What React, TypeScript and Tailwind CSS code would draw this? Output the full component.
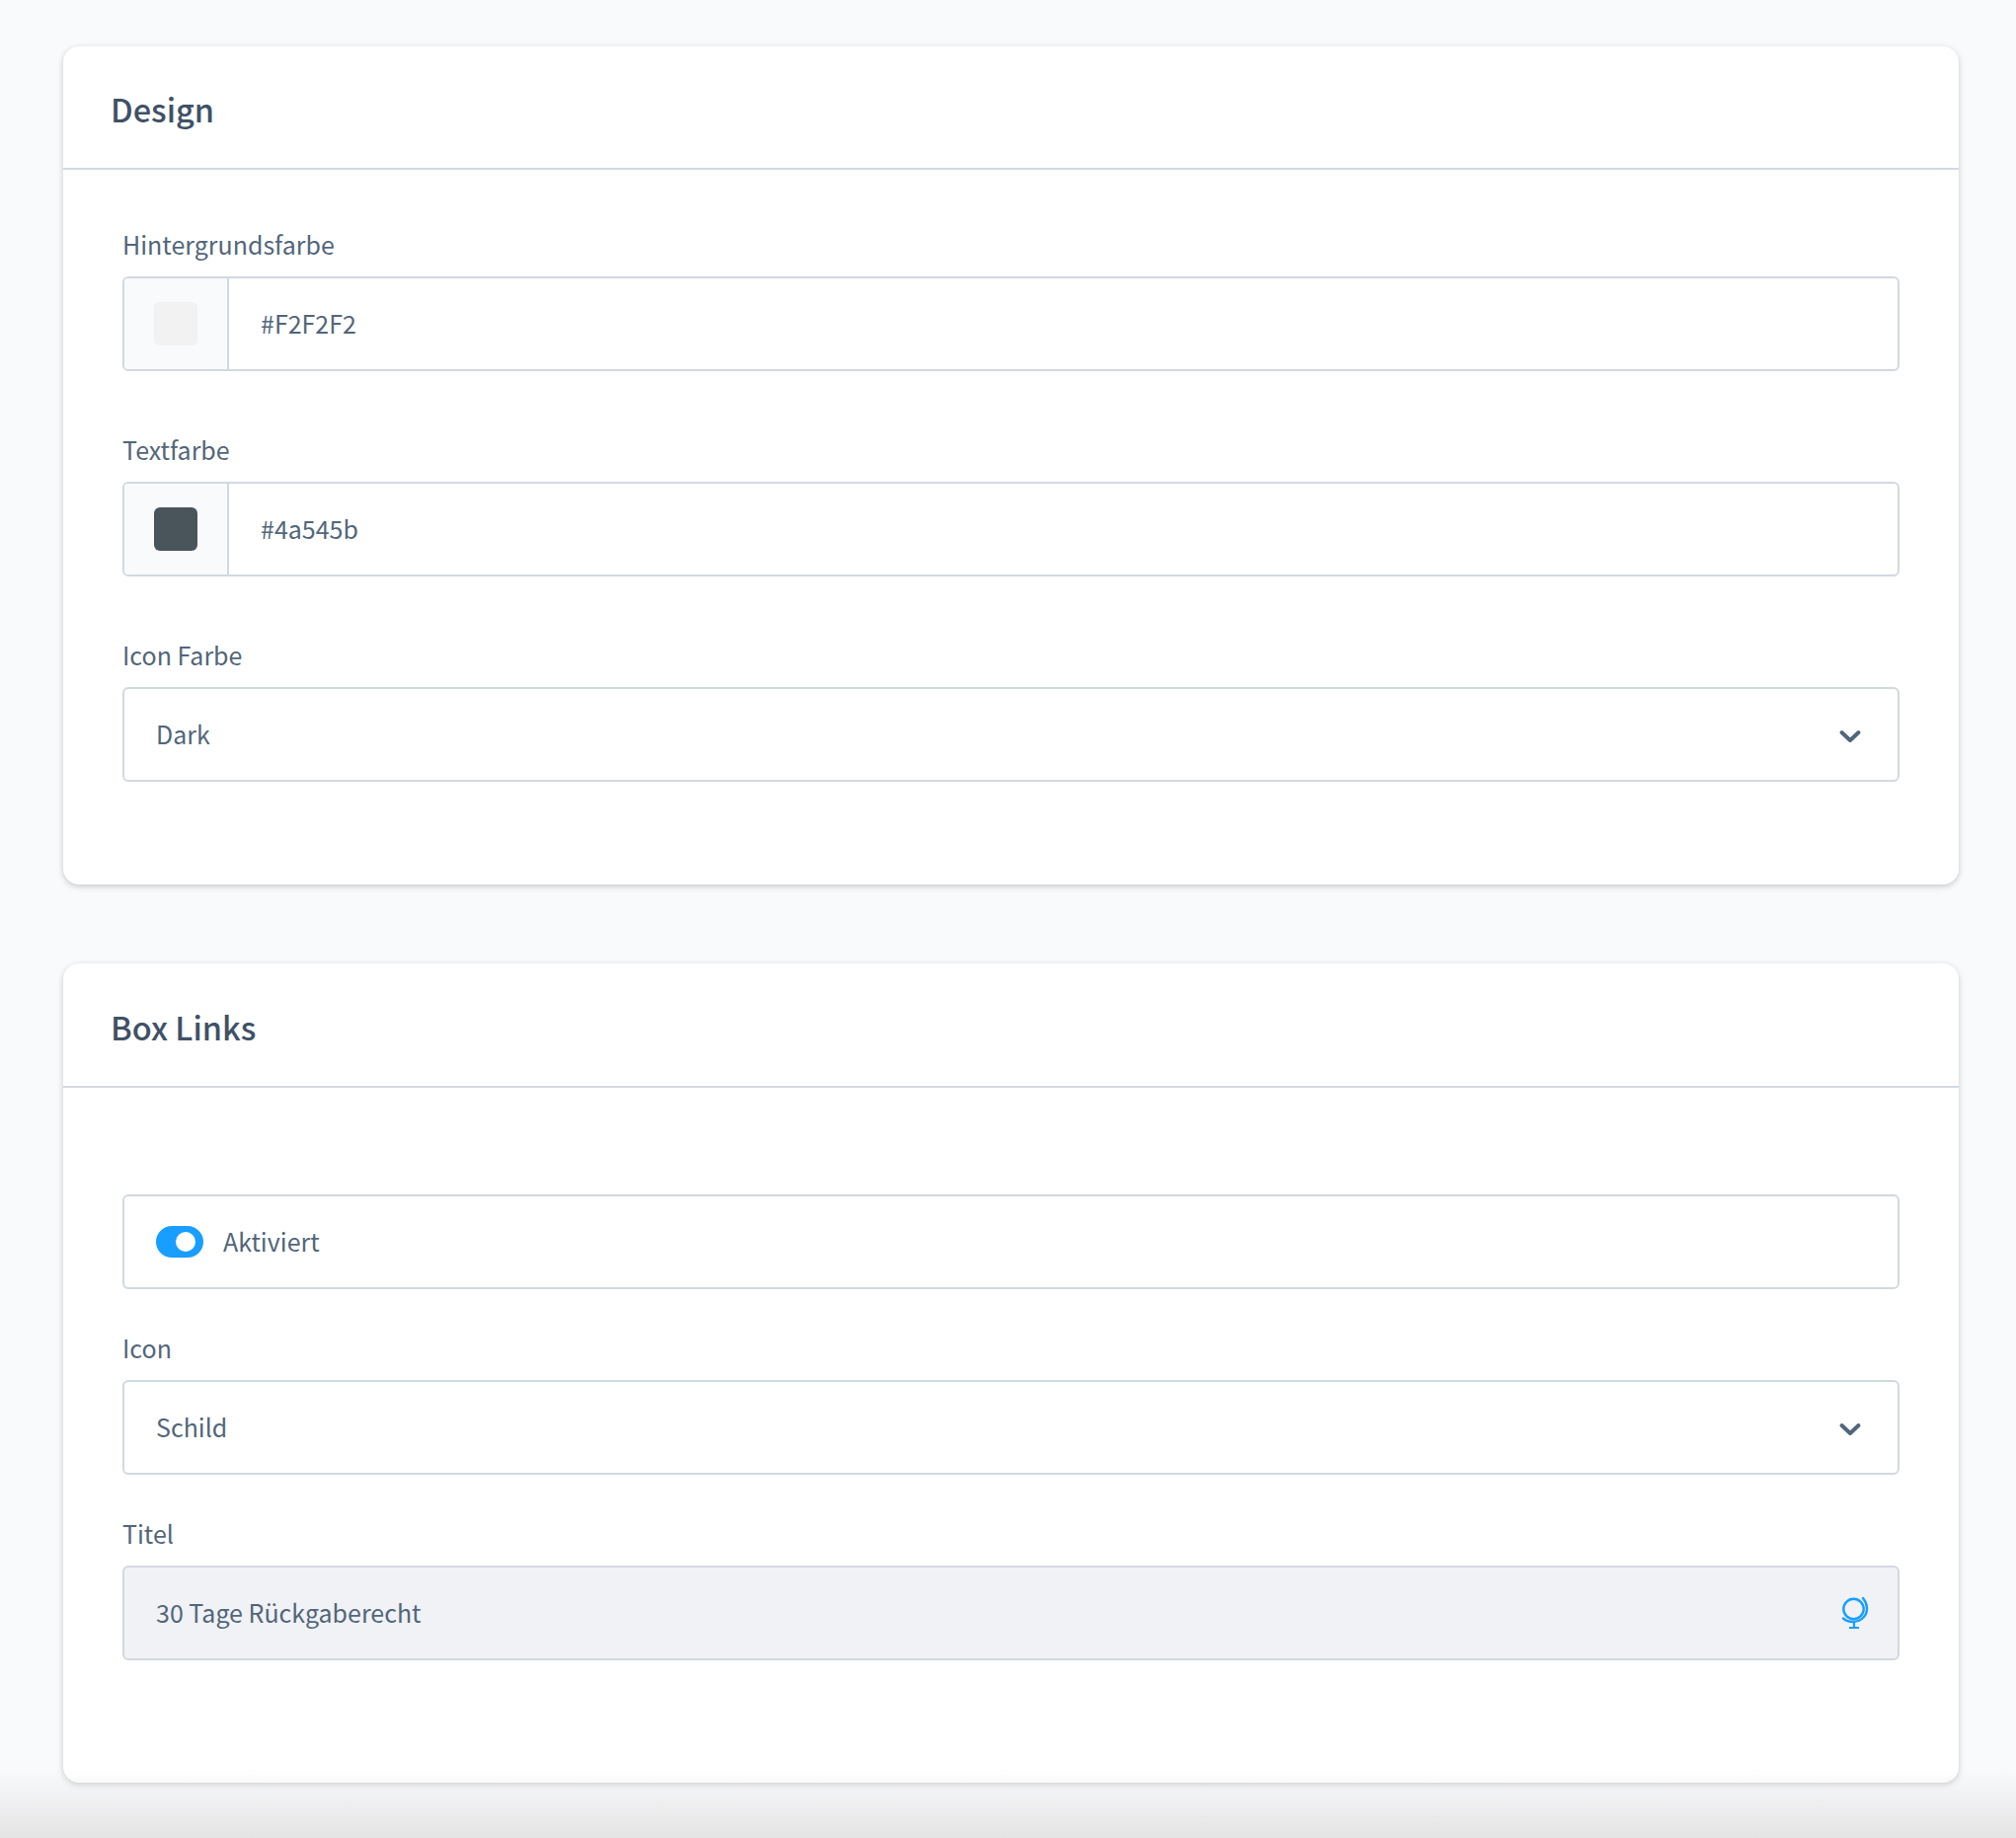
function Chevron() {
  return (
    <svg width="24" height="24" viewBox="0 0 24 24" fill="none" className="mt-[3px] shrink-0">
      <path d="M3.5 8 L12 16 L20.5 8" stroke="#52667a" strokeWidth="4" strokeLinecap="round" strokeLinejoin="round" />
    </svg>
  );
}

function Globe() {
  return (
    <svg width="28" height="34" viewBox="0 0 28 34" fill="none" className="shrink-0">
      <circle cx="12.5" cy="13" r="10.2" stroke="#189eff" strokeWidth="2.4" />
      <path d="M22 2 C27 8 27.5 16 22.5 21.5 C17 27 8 27.5 2 22.5" stroke="#189eff" strokeWidth="2.4" strokeLinecap="round" />
      <path d="M13 26 V31 M8 32 H18" stroke="#189eff" strokeWidth="2.2" />
    </svg>
  );
}

function Label({ children }: { children: string }) {
  return <div className="mb-[17px] h-[32px] text-[25px] leading-[32px] text-[#52667a]">{children}</div>;
}

function ColorField({ label, value, color }: { label: string; value: string; color: string }) {
  return (
    <div className="mb-[63px]">
      <Label>{label}</Label>
      <div className="flex h-[96px] rounded-[6px] border-2 border-[#d1d9e0] bg-white">
        <div className="flex w-[106px] items-center justify-center rounded-l-[4px] border-r-2 border-[#d1d9e0] bg-[#f9fafb]">
          <div className="h-[44px] w-[44px] rounded-[6px]" style={{ backgroundColor: color }} />
        </div>
        <div className="flex flex-1 items-center pl-[32px] text-[25px] text-[#52667a]">{value}</div>
      </div>
    </div>
  );
}

function SelectField({ label, value, mb }: { label: string; value: string; mb: string }) {
  return (
    <div className={mb}>
      <Label>{label}</Label>
      <div className="flex h-[96px] items-center justify-between rounded-[6px] border-2 border-[#d1d9e0] bg-white pl-[32px] pr-[36px] text-[25px] text-[#52667a]">
        <span>{value}</span>
        <Chevron />
      </div>
    </div>
  );
}

function Card({ title, height, children, className }: { title: string; height: string; children: React.ReactNode; className: string }) {
  return (
    <section className={`rounded-[16px] bg-white shadow-[0_2px_6px_rgba(0,0,0,0.2)] ${className}`}>
      <header className={`flex items-center border-b-2 border-[#d1d9e0] pl-[48px] text-[32.5px] font-medium text-[#3f5166] ${height}`}>
        <span className="pt-[4px]">{title}</span>
      </header>
      {children}
    </section>
  );
}

export default function App() {
  return (
    <div
      className="relative h-[1862px] overflow-hidden bg-[#f9fafb] pl-[64px] pr-[58px] pt-[47px] text-[#52667a]"
      style={{ fontFamily: '"Noto Sans CJK SC", "Noto Sans", sans-serif' }}
    >
      <Card title="Design" height="h-[125px]" className="mb-[80px] h-[849px]">
        <div className="px-[60px] pt-[59px]">
          <ColorField label="Hintergrundsfarbe" value="#F2F2F2" color="#f2f2f2" />
          <ColorField label="Textfarbe" value="#4a545b" color="#4a545b" />
          <SelectField label="Icon Farbe" value="Dark" mb="" />
        </div>
      </Card>
      <Card title="Box Links" height="h-[126px]" className="h-[830px]">
        <div className="px-[60px] pt-[108px]">
          <div className="mb-[43px] flex h-[96px] items-center rounded-[6px] border-2 border-[#d1d9e0] pl-[32px]">
            <div className="flex h-[32px] w-[48px] items-center justify-end rounded-full bg-[#189eff] pr-[8px]">
              <div className="h-[20px] w-[20px] rounded-full bg-white" />
            </div>
            <span className="ml-[20px] pb-[1px] text-[25px] text-[#52667a]">Aktiviert</span>
          </div>
          <SelectField label="Icon" value="Schild" mb="mb-[43px]" />
          <Label>Titel</Label>
          <div className="flex h-[96px] items-center justify-between rounded-[6px] border-2 border-[#d1d9e0] bg-[#f0f2f5] pl-[32px] pr-[29px] text-[25px] text-[#52667a]">
            <span>30 Tage Rückgaberecht</span>
            <Globe />
          </div>
        </div>
      </Card>
      <div className="pointer-events-none absolute bottom-0 left-0 right-0 h-[70px] bg-gradient-to-b from-transparent to-[#e4e4e5]" />
    </div>
  );
}
